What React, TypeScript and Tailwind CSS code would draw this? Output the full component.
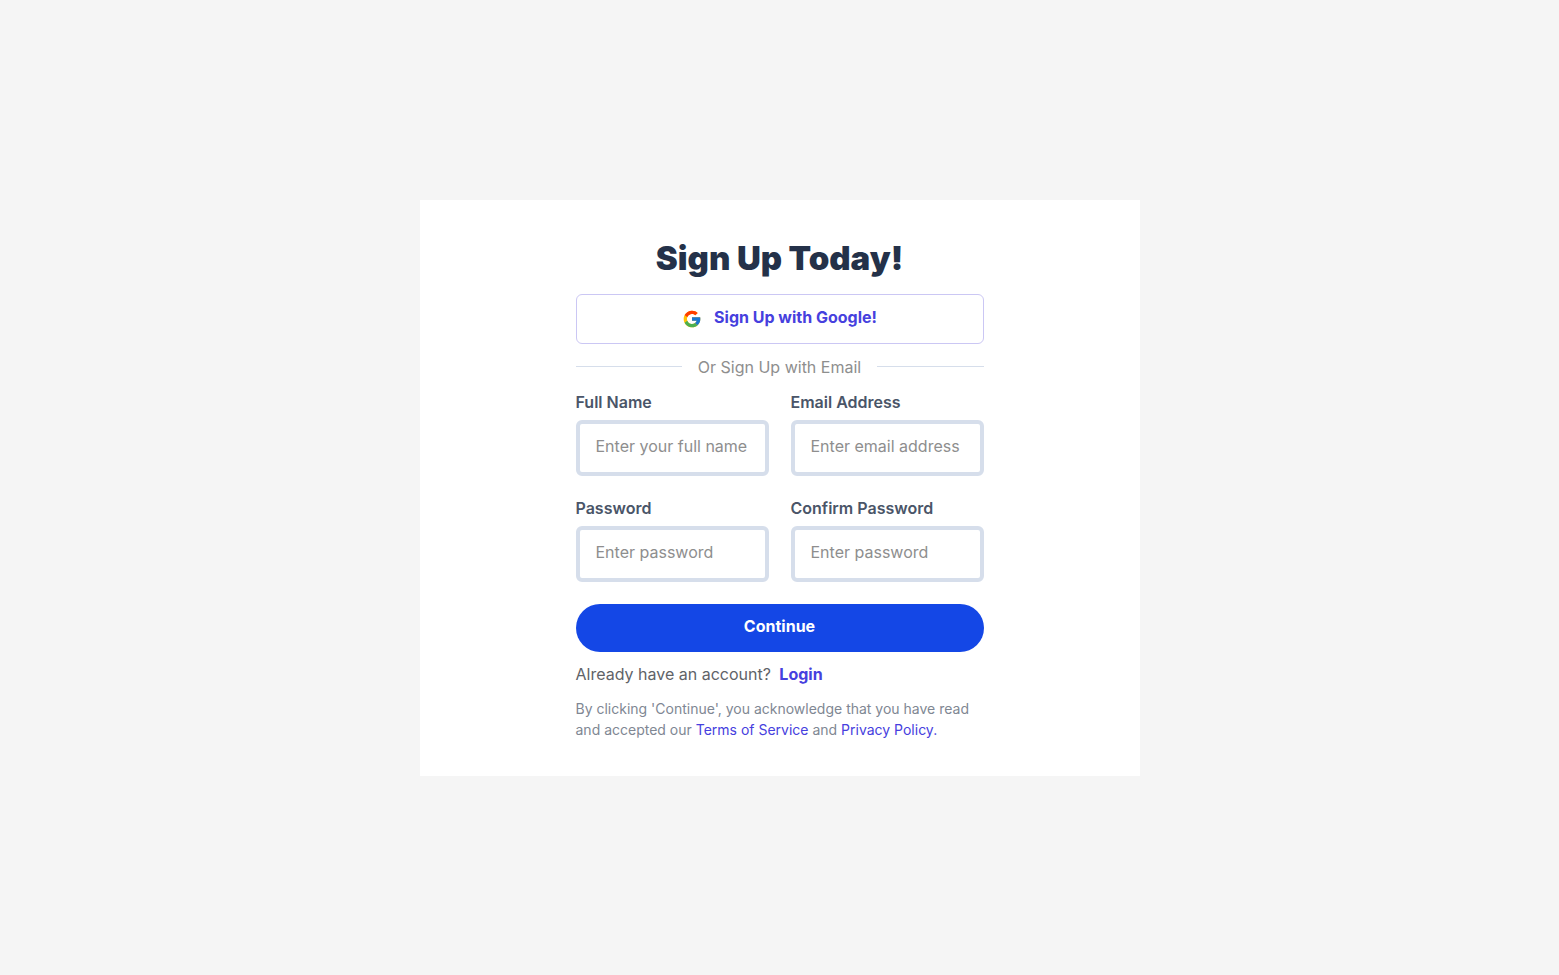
import type { InputHTMLAttributes } from "react";

type FieldProps = InputHTMLAttributes<HTMLInputElement> & { id: string; label: string };

function Field({ id, label, ...rest }: FieldProps) {
  return (
    <div className="flex min-w-0 flex-col">
      <label htmlFor={id} className="mb-1.5 text-base leading-6 font-semibold text-[#4a5568]">
        {label}
      </label>
      <input
        id={id}
        className="h-14 w-full min-w-0 rounded-md border-4 border-[#d6deeb] bg-white px-4 pb-1 text-base text-gray-700 outline-none placeholder:text-[#8e8e8e] focus:border-indigo-300"
        {...rest}
      />
    </div>
  );
}

function GoogleLogo() {
  return (
    <svg viewBox="0 0 48 48" className="mt-1 size-5" aria-hidden="true">
      <path fill="#FFC107" d="M43.611 20.083H42V20H24v8h11.303c-1.649 4.657-6.08 8-11.303 8-6.627 0-12-5.373-12-12s5.373-12 12-12c3.059 0 5.842 1.154 7.961 3.039l5.657-5.657C34.046 6.053 29.268 4 24 4 12.955 4 4 12.955 4 24s8.955 20 20 20 20-8.955 20-20c0-1.341-.138-2.65-.389-3.917z" />
      <path fill="#FF3D00" d="M6.306 14.691l6.571 4.819C14.655 15.108 18.961 12 24 12c3.059 0 5.842 1.154 7.961 3.039l5.657-5.657C34.046 6.053 29.268 4 24 4 16.318 4 9.656 8.337 6.306 14.691z" />
      <path fill="#4CAF50" d="M24 44c5.166 0 9.86-1.977 13.409-5.192l-6.19-5.238A11.91 11.91 0 0 1 24 36c-5.202 0-9.619-3.317-11.283-7.946l-6.522 5.025C9.505 39.556 16.227 44 24 44z" />
      <path fill="#1976D2" d="M43.611 20.083H42V20H24v8h11.303a12.04 12.04 0 0 1-4.087 5.571l.003-.002 6.19 5.238C36.971 39.205 44 34 44 24c0-1.341-.138-2.65-.389-3.917z" />
    </svg>
  );
}

export default function App() {
  return (
    <div className="flex min-h-screen items-center justify-center bg-[#f5f5f5] font-['Inter',sans-serif]">
      <main className="flex w-full max-w-[720px] justify-center bg-white px-4 py-9">
        <form className="flex w-full max-w-[408px] flex-col" onSubmit={(e) => e.preventDefault()}>
          <h1 className="mb-3.5 text-center text-[33px] leading-[44px] font-black text-[#243149]">
            Sign Up Today!
          </h1>
          <button type="button" className="flex h-[50px] items-center justify-center gap-3 rounded-md border border-[#cbc7f4] pb-1 text-base font-bold text-[#4640de]">
            <GoogleLogo />
            Sign Up with Google!
          </button>
          <div className="my-[11px] flex items-center gap-4">
            <span className="h-px flex-1 bg-[#d6deeb]" />
            <span className="text-base leading-6 text-[#8e8e8e]">Or Sign Up with Email</span>
            <span className="h-px flex-1 bg-[#d6deeb]" />
          </div>
          <div className="grid grid-cols-2 gap-x-[22px] gap-y-5">
            <Field id="name" label="Full Name" type="text" placeholder="Enter your full name" />
            <Field id="email" label="Email Address" type="email" placeholder="Enter email address" />
            <Field id="password" label="Password" type="password" placeholder="Enter password" />
            <Field id="confirm" label="Confirm Password" type="password" placeholder="Enter password" />
          </div>
          <button type="submit" className="mt-[22px] h-12 rounded-full bg-[#1447e6] pb-1 text-base font-bold text-white">
            Continue
          </button>
          <p className="mt-2.5 text-base leading-6 text-[#5f6368]">
            Already have an account?{" "}
            <a href="#login" className="ml-1 font-bold text-[#4640de]">Login</a>
          </p>
          <p className="mt-3 text-sm leading-[21px] text-[#808793]">
            By clicking 'Continue', you acknowledge that you have read and accepted our{" "}
            <a href="#terms" className="text-[#4640de]">Terms of Service</a> and{" "}
            <a href="#privacy" className="text-[#4640de]">Privacy Policy.</a>
          </p>
        </form>
      </main>
    </div>
  );
}
